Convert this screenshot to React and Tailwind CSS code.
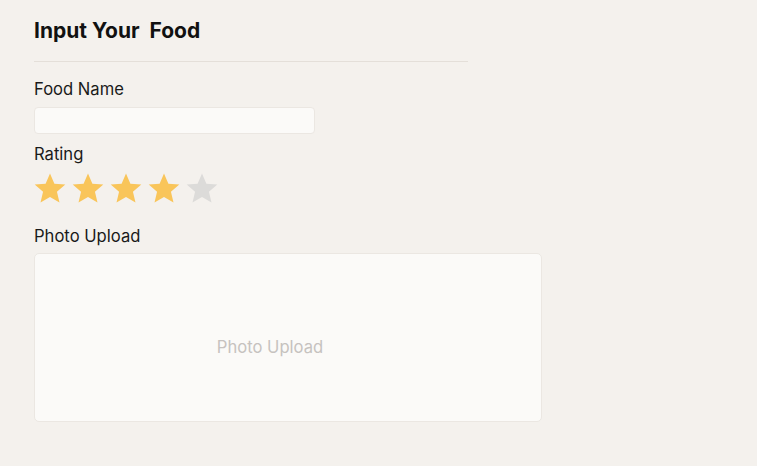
import React from 'react';

function Star({ filled }) {
  return (
    <svg viewBox="0 0 24 24" className="w-[34px] h-[34px]">
      <path
        d="M12 1.8l3.1 7.2 7.7.6-5.9 5.1 1.8 7.6L12 18.3 5.3 22.3l1.8-7.6L1.2 9.6l7.7-.6z"
        fill={filled ? '#f9c55a' : '#dcdbd9'}
      />
    </svg>
  );
}

export default function App() {
  const rating = 4;

  return (
    <div className="min-h-screen w-full bg-[#f4f1ed] text-[#111] font-['Inter',sans-serif]">
      <div className="pl-[34px] pt-[16px]">
        <h1 className="text-[21px] font-bold leading-[29px] whitespace-pre">Input Your  Food</h1>
        <div className="mt-[16px] w-[434px] h-px bg-[#e4dfd9]" />

        <label className="block mt-[17px] text-[16.6px] leading-[20px] text-[#1a1a1a]">Food Name</label>
        <input
          type="text"
          className="block mt-[8px] w-[281px] h-[27px] rounded-[4px] bg-[#fbfaf8] border border-[#ebe7e2] outline-none"
        />

        <div className="mt-[10px] text-[16.6px] leading-[20px] text-[#1a1a1a]">Rating</div>
        <div className="mt-[7px] flex gap-[4px] -ml-[1px]">
          {[1, 2, 3, 4, 5].map((n) => (
            <Star key={n} filled={n <= rating} />
          ))}
        </div>

        <div className="mt-[21px] text-[16.6px] leading-[20px] text-[#1a1a1a]">Photo Upload</div>
        <div className="mt-[7px] w-[508px] h-[169px] rounded-[5px] bg-[#fbfaf8] border border-[#ebe7e2] flex items-center justify-center pr-[36px] pt-[20px]">
          <span className="text-[16.6px] text-[#c6c2bf]">Photo Upload</span>
        </div>
      </div>
    </div>
  );
}
